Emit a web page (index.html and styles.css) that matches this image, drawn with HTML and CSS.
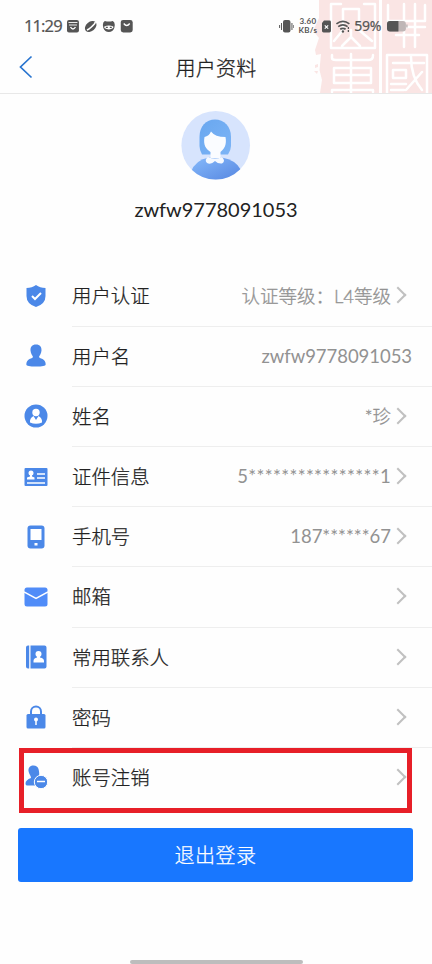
FILE: index.html
```
<!DOCTYPE html>
<html lang="zh-CN">
<head>
<meta charset="utf-8">
<title>用户资料</title>
<link rel="stylesheet" href="styles.css">
</head>
<body>
<div class="screen">
  <header class="top">
    <svg class="seal" width="124" height="93" viewBox="308 0 124 93" fill="none">
      <path fill="#fae5e4" d="M319 0H432V93H320L322 80L319.500 70L321 54L316 55L315 50L319 38L315 33L314 29L319 18Z"/>
      <path fill="#fae5e4" d="M315 65l3-1v3l-3 1zM314 71l4 0-1 3z"/>
      <g stroke="#fff" stroke-width="2.500" stroke-linejoin="round" stroke-linecap="round">
        <path d="M341 4H331V48H375V4H364M343 9V30L334 41M343 9H359V30L372 41M351 30v7l-9 9M351 37l9 9"/>
        <path d="M380.500 0V93" stroke-width="3"/>
        <path d="M351 54V93M332 55V58Q332 60 336 60H369Q373 60 373 55M334 68H371M334 75H371M334 83H371M334 68V83M371 68V83M332 92V90H373V92"/>
        <path d="M388 5V21H425V5M390 27H425M396 35H419M404 4V47M415 4V47"/>
        <path d="M387 93V55H427V93M393 63H424M393 70H406V78H393ZM411 57C411 74 416 83 422 90M422 72L406 90M391 84H406M391 90H404"/>
      </g>
    </svg>
    <div class="status">
      <span class="time">11:29</span>
      <svg class="apps" width="68" height="14" viewBox="66 18 68 14">
        <rect x="67" y="19" width="12" height="12.500" rx="2" fill="#555"/>
        <path d="M68.500 21.500h9M69 24h8" stroke="#eee" stroke-width="1"/>
        <path d="M70.500 26q2.500 4 5 0" fill="none" stroke="#fff" stroke-width="1.400"/>
        <ellipse cx="90.800" cy="25.500" rx="6.500" ry="4.600" transform="rotate(-40 90.800 25.500)" fill="#555"/>
        <path d="M87 29c2-.5 3-1.500 4.500-3s3.500-2.500 4-5" fill="none" stroke="#fff" stroke-width="1.600"/>
        <path d="M103 24q0-3 2-4l2 .5h4l2-.5q2 1 2 4l-.5 3q-1.500 4-5.500 4t-5.500-4z" fill="#555"/>
        <path d="M104.500 25.500q4.500-2 9 0v1.500q-4.500 3-9 0z" fill="#fff"/>
        <path d="M106 26.300h2M110 26.300h2" stroke="#555" stroke-width="1.300"/>
        <rect x="121" y="19" width="12" height="12.500" rx="2.500" fill="#555"/>
        <path d="M124 22.500q3 4 6 0" fill="none" stroke="#fff" stroke-width="1.300"/>
      </svg>
      <svg class="vibrate" width="16" height="14" viewBox="279 18 16 14">
        <rect x="283" y="19" width="7.500" height="12.500" rx="2" fill="#555"/>
        <path d="M281.500 22v7M279.600 24v3M292 22v7M293.900 24v3" stroke="#555" stroke-width="1"/>
      </svg>
      <div class="speed"><span>3.60</span><span>KB/s</span></div>
      <svg class="net" width="30" height="14" viewBox="322 18 30 14">
        <path d="M325 19.500h5.500q1.500 0 1.500 1.500v9q0 1.500-1.500 1.500h-6q-1.500 0-1.500-1.500V22z" fill="#555"/>
        <path d="M325.800 24.300l3.400 3.400m0-3.400l-3.400 3.400" stroke="#fff" stroke-width="1.200"/>
        <path d="M337.500 22.800q6.500-5 13 0M339.300 25.600q4.700-3.500 9.400 0M341.300 28.300q2.700-2 5.400 0" stroke="#555" stroke-width="1.700" fill="none"/>
        <circle cx="344" cy="30.500" r="1.200" fill="#555"/><path d="M349.500 26v2m0 1v2" stroke="#555" stroke-width="1.300"/>
      </svg>
      <span class="percent">59%</span>
      <svg class="battery" width="22" height="12" viewBox="386 20 22 12">
        <rect x="387" y="21" width="19" height="10.500" rx="3" fill="#bfb6b6"/>
        <path d="M390 21h8.500v10.500H390q-3 0-3-3V24q0-3 3-3z" fill="#555"/><path d="M407 24.500v3" stroke="#bfb6b6" stroke-width="1.500"/>
      </svg>
    </div>
    <div class="nav">
      <svg class="back" width="14" height="24" viewBox="0 0 14 24"><path d="M12.500 1.500L1.500 12l11 10.500" fill="none" stroke="#2874cf" stroke-width="1.700"/></svg>
      <h1>用户资料</h1>
    </div>
  </header>
  <section class="profile">
    <svg width="70" height="70" viewBox="181 110 70 70">
      <defs>
        <linearGradient id="hair" x1="0" y1="0" x2="1" y2="1"><stop stop-color="#69a7ef"/><stop offset="1" stop-color="#7cb4f6"/></linearGradient>
        <linearGradient id="body" x1="0" y1="0" x2="1" y2="1"><stop stop-color="#86bafb"/><stop offset="1" stop-color="#5585e0"/></linearGradient>
        <clipPath id="disc"><circle cx="215.700" cy="145.300" r="34.300"/></clipPath>
      </defs>
      <circle cx="215.700" cy="145.300" r="34.300" fill="#d7e4fd"/>
      <path d="M202 154.500Q199.500 150 199.500 146V137C199.500 126 206 119.500 215 119.500S231 126 231 137V146Q231 150 228 154.500Z" fill="url(#hair)"/>
      <path clip-path="url(#disc)" d="M191 172Q195 160 209 157.500H222Q236 160 241 170L236 181H195Z" fill="url(#body)"/>
      <path d="M204.500 137Q209 136 211 131.500Q215 137 225.500 137C227 145 224 149 220.500 152V158H210.500V152C206 149 203 145 204.500 137Z" fill="#fafcff"/>
      <path d="M208 157Q215 160 222 157Q226 161 222 163.500Q218 164 215 161Q211 165 207 163Q204 160 208 157Z" fill="#f5f9ff"/>
    </svg>
    <p>zwfw9778091053</p>
  </section>
  <main class="list">
    <div class="row"><svg class="icon" viewBox="0 0 24 24"><path d="M12 1Q16 4 21.500 4V12Q21.500 20 12 23Q2.500 20 2.500 12V4Q8 4 12 1Z"/><path class="line" d="M8 12l3 3 6-6"/></svg><div class="cell"><span>用户认证</span><span class="value v1">认证等级：L4等级</span><i class="arrow"></i></div></div>
    <div class="row"><svg class="icon" viewBox="0 0 24 24"><path d="M12 .5C8 .5 6.300 3 6.500 6.500C6.800 10 8.500 11.500 9 13Q9 14 5.500 15Q2.300 16.500 2.300 20.500Q2.300 22.500 12 22.500T21.700 20.500Q21.700 16.500 18.500 15Q15 14 15 13C15.500 11.500 17.200 10 17.500 6.500C17.700 3 16 .5 12 .5Z"/></svg><div class="cell"><span>用户名</span><span class="value v2">zwfw9778091053</span></div></div>
    <div class="row"><svg class="icon" viewBox="0 0 24 24"><circle cx="12" cy="12" r="11.500"/><circle class="white" cx="12" cy="8.500" r="3.700"/><path class="white" d="M9.500 12L12 16L14.500 12Q18.500 14 18 18.500Q12 21 6 18.500Q5.500 14 9.500 12Z"/></svg><div class="cell"><span>姓名</span><span class="value v3">*珍</span><i class="arrow"></i></div></div>
    <div class="row"><svg class="icon" viewBox="0 0 24 24"><rect x=".5" y="3" width="23" height="18" rx="1"/><circle class="white" cx="7" cy="8" r="2.500"/><path class="white" d="M6 9h2v2.500l2.500 1v2H3v-2l3-1z"/><path class="line thin" d="M13 9h8M13 13h8M3 18h18"/></svg><div class="cell"><span>证件信息</span><span class="value v4">5****************1</span><i class="arrow"></i></div></div>
    <div class="row"><svg class="icon" viewBox="0 0 24 24"><rect x="3.500" y=".5" width="17" height="23" rx="3"/><rect class="white" x="6.500" y="4" width="11" height="11"/><rect class="white" x="10.500" y="18" width="3" height="2.500"/></svg><div class="cell"><span>手机号</span><span class="value v5">187******67</span><i class="arrow"></i></div></div>
    <div class="row"><svg class="icon mail" viewBox="0 0 24 24"><rect x=".5" y="2.500" width="23" height="19" rx="2.500"/><path class="line thin" d="M0 7l12 6.500L24 7"/></svg><div class="cell"><span>邮箱</span><i class="arrow"></i></div></div>
    <div class="row"><svg class="icon" viewBox="0 0 24 24"><path d="M4 .5h1.200v23H4Q2 23.500 2 21.500v-19Q2 .5 4 .5zM6.500 .5H20.500Q22.500 .5 22.500 2.500V21.500Q22.500 23.500 20.500 23.500H6.500z"/><circle class="white" cx="14.500" cy="9" r="3"/><path class="white" d="M13 10.500h3v2q4 .5 4 3.500v1.500H9.500V16q0-3 3.500-3.500z"/></svg><div class="cell"><span>常用联系人</span><i class="arrow"></i></div></div>
    <div class="row"><svg class="icon" viewBox="0 0 24 24"><rect x="2.500" y="9" width="19" height="14.500" rx="1.500"/><path d="M7 10V6.500a5 5 0 0110 0V10" class="shackle"/><circle class="white" cx="12" cy="14.500" r="2"/><path class="line thin" d="M12 15v5"/></svg><div class="cell"><span>密码</span><i class="arrow"></i></div></div>
    <div class="row marked"><svg class="icon" viewBox="0 0 24 24"><path d="M9.500 .5C5.500 .5 4.300 3 4.500 6C4.800 9 7 10.500 7 13Q1.500 15 1.500 18.500Q1.500 20.500 3 20.500H13Q10 14 15 11C15.500 8 15 6 14.500 4Q13.500 .5 9.500 .5Z"/><circle cx="17" cy="17" r="6.700" stroke="#fff" stroke-width="1"/><path class="line thin" d="M13 16.500h8"/></svg><div class="cell"><span>账号注销</span><i class="arrow"></i></div></div>
  </main>
  <button class="logout">退出登录</button>
  <div class="home"></div>
</div>
</body>
</html>
```
FILE: styles.css
```
*, *::after { box-sizing: border-box; }
body { margin: 0; background: #fefefe; font-family: Lato, "Noto Sans CJK SC", sans-serif; color: #222; }
.screen { width: 432px; height: 964px; display: flex; flex-direction: column; overflow: hidden; position: relative; }
.top { height: 94px; flex: none; border-bottom: 1px solid #e8e8e8; position: relative; }
.seal { position: absolute; right: 0; top: 0; }
.status { position: relative; height: 42px; padding: 9px 24px 0; display: flex; align-items: center; color: #555; }
.time { font: 16.5px/20px "Noto Sans"; width: 42px; letter-spacing: -.9px; -webkit-text-stroke: .2px; }
.vibrate { margin-left: 145px; }
.speed { width: 25px; display: flex; flex-direction: column; align-items: center; font: 700 8px/9px Lato; letter-spacing: .3px; margin-left: 1px; }
.net { margin-left: 1px; }
.percent { width: 32px; font: 14px/18px "Noto Sans"; margin-left: 3px; letter-spacing: -.3px; -webkit-text-stroke: .2px; }
.nav { position: relative; height: 51px; display: flex; justify-content: center; align-items: center; }
.back { position: absolute; left: 19px; top: 13px; }
.nav h1 { margin: 0; font-size: 20px; font-weight: 300; line-height: 30px; letter-spacing: .2px; padding-top: 1px; -webkit-text-stroke: .3px; }
.profile { height: 172.4px; flex: none; display: flex; flex-direction: column; align-items: center; padding-top: 16px; }
.profile p { margin: 16px 0 0; font-size: 20px; line-height: 26px; letter-spacing: -.02px; }
.list { flex: none; }
.row { height: 60.2px; display: flex; align-items: center; padding-left: 24px; position: relative; font-size: 19.4px; font-weight: 300; }
.icon { width: 24px; height: 24px; fill: #4b88e8; flex: none; margin-top: -1px; }
.mail { fill: #508cf8; }
.white { fill: #fff; }
.line { fill: none; stroke: #fff; stroke-width: 2; }
.thin { stroke-width: 1.5; }
.shackle { fill: none; stroke: #4b88e8; stroke-width: 2; }
.cell { margin-left: 24px; height: 100%; flex: 1; display: flex; align-items: center; padding: 0 20px 0 0; border-bottom: 1px solid #eee; }
.cell > span:first-child { margin-top: -2px; -webkit-text-stroke: .25px; }
.value { margin: -1px 0 0 auto; color: #929292; font-size: 18.5px; font-weight: 400; white-space: nowrap; }
.v1, .v3 { font-weight: 300; -webkit-text-stroke: .3px; margin-top: -2px; }
.v2 { letter-spacing: -.05px; }
.v4 { letter-spacing: .36px; }
.arrow { width: 12px; height: 12px; border: solid #c0c0c0; border-width: 2px 2px 0 0; transform: rotate(45deg); margin: -1px 8px 0 1px; flex: none; }
.cell > span:first-child + .arrow { margin-left: auto; }
.marked .cell { border-bottom: 0; }
.marked::after { content: ""; position: absolute; left: 19px; top: -.2px; width: 393px; height: 65px; border: 5px solid #e71f28; }
.logout { flex: none; margin: 19.6px 19px 0 18px; height: 54px; border: 0; border-radius: 3px; background: #1877ff; color: #fff; font: 300 20px/54px Lato, "Noto Sans CJK SC", sans-serif; letter-spacing: .5px; padding: 0; -webkit-text-stroke: .25px; }
.home { width: 173px; height: 4px; border-radius: 2px; background: #bdbdbd; margin: auto 0 0 130px; }
```
